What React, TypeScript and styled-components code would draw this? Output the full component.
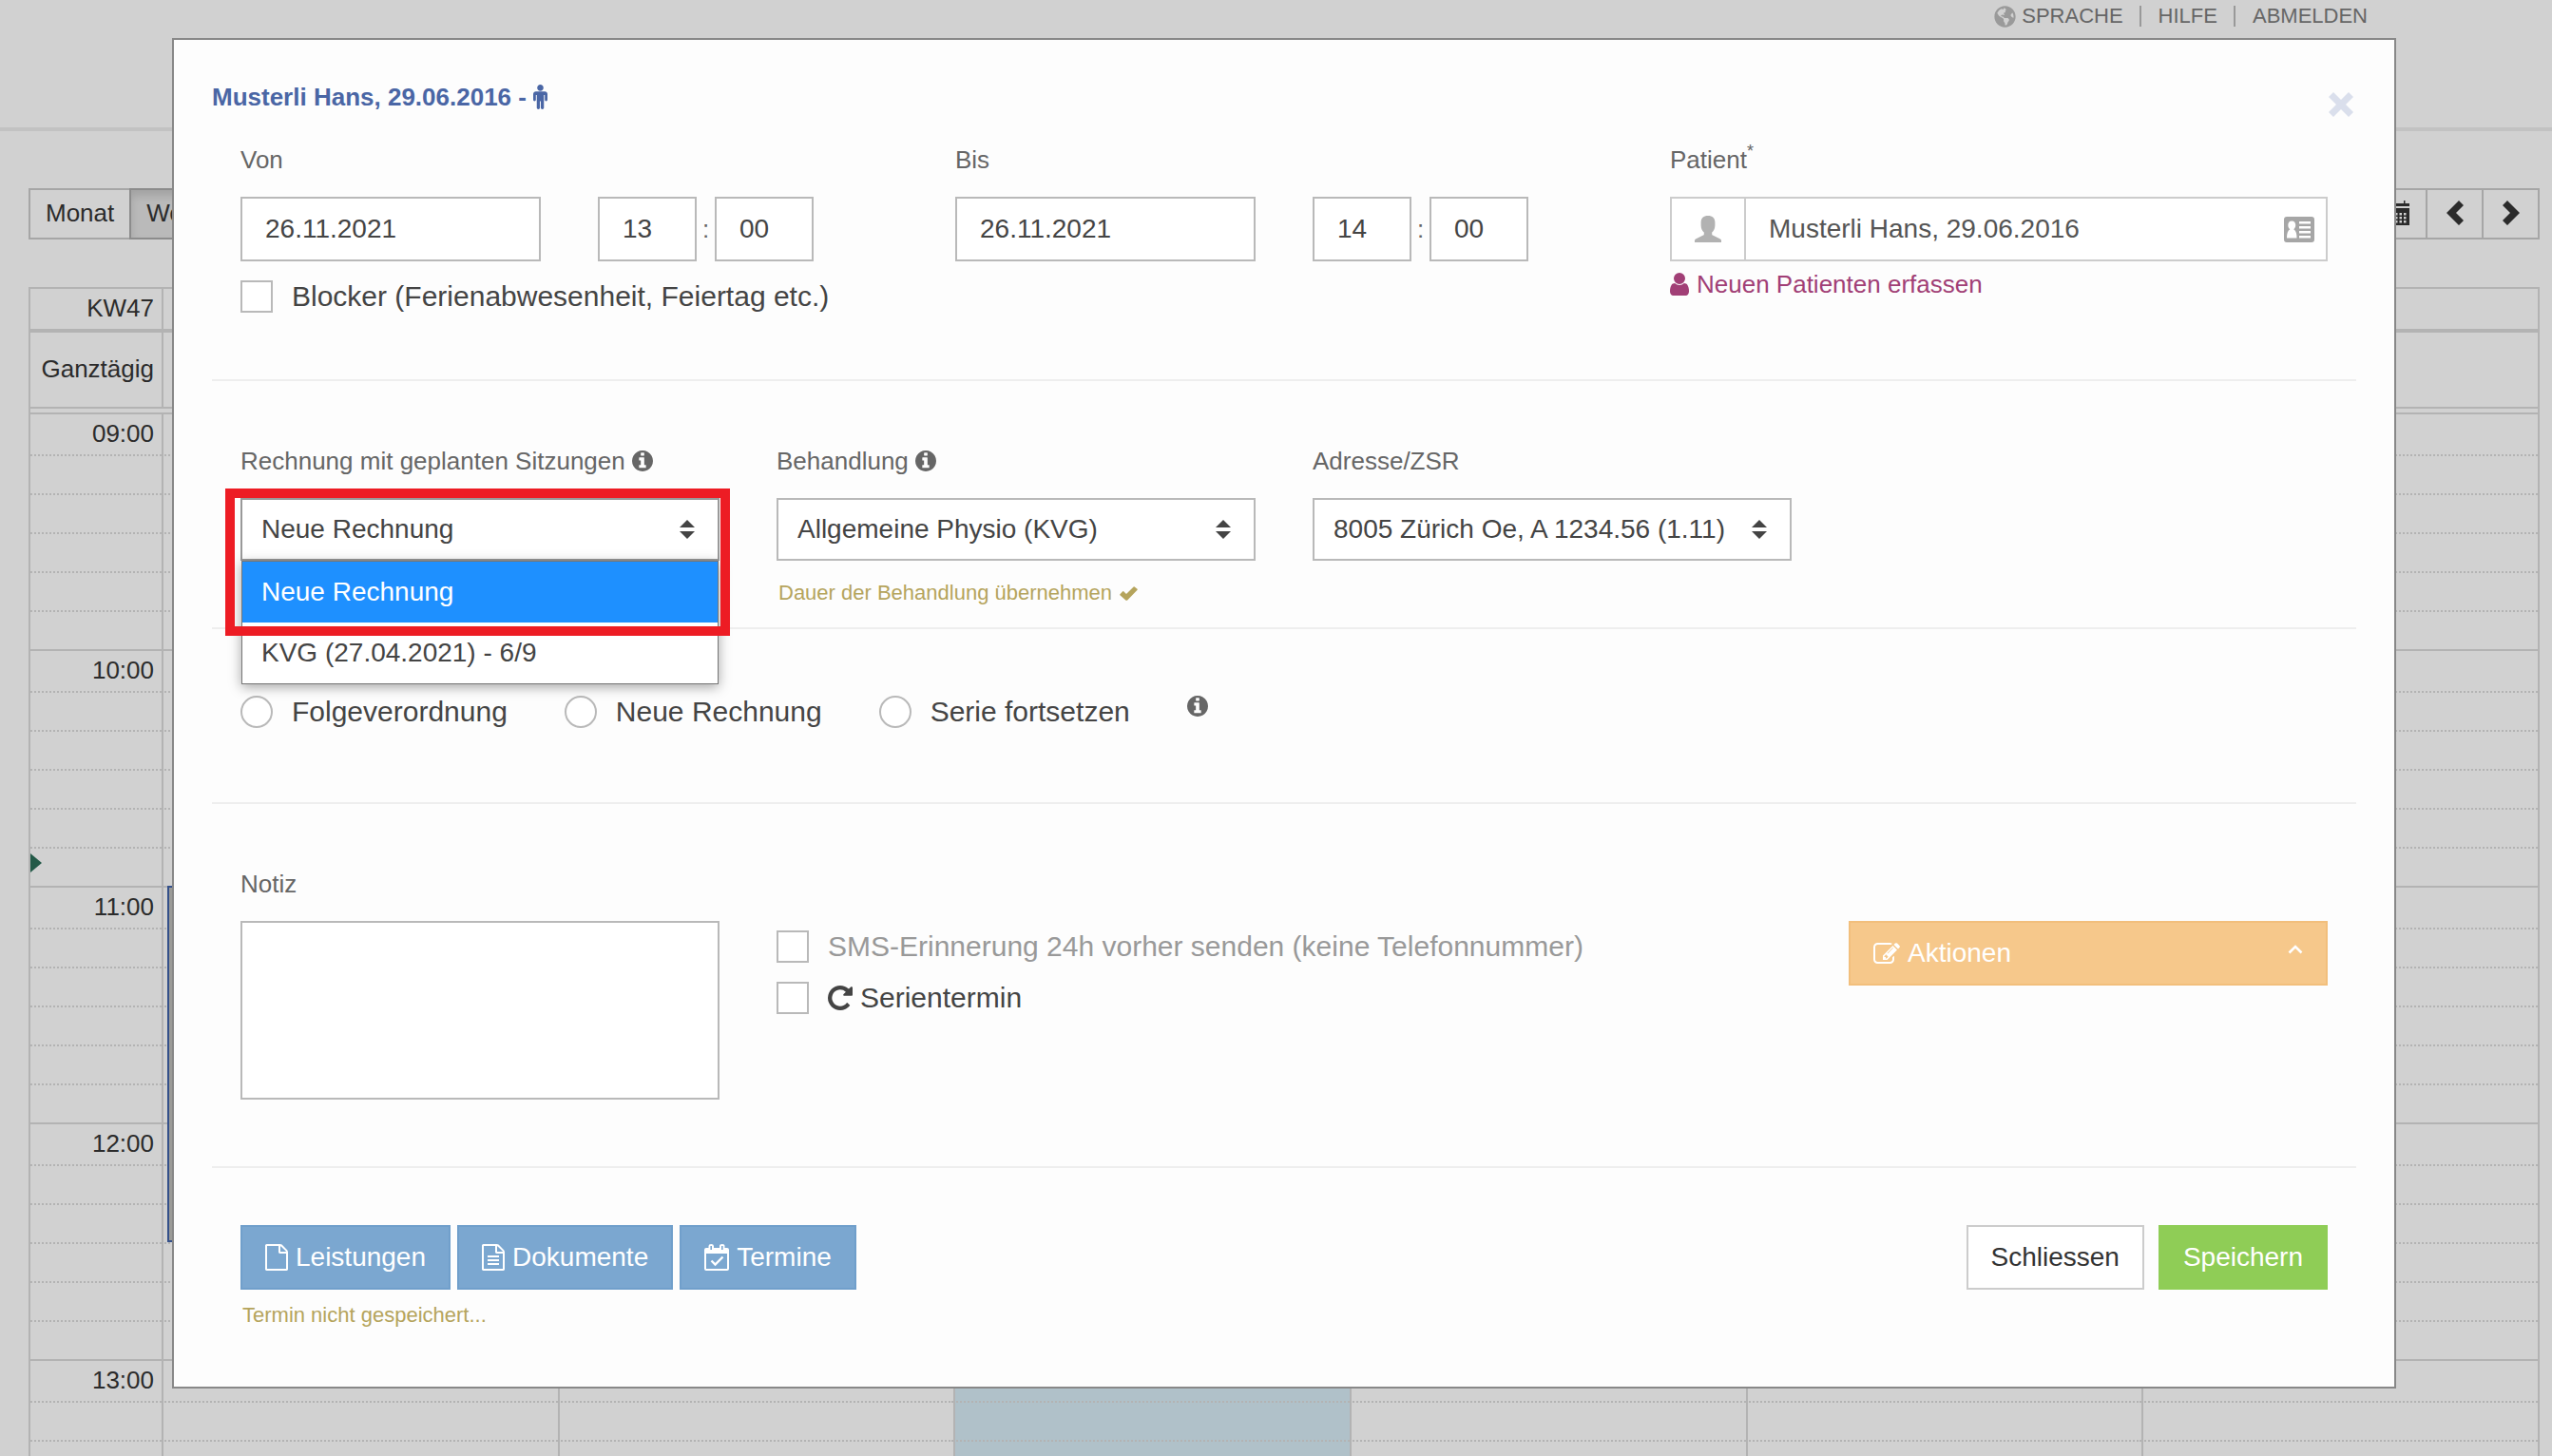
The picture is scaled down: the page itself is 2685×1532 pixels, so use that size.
import React from 'react';
import styled, { createGlobalStyle, css } from 'styled-components';
import { FaGlobeAmericas } from 'react-icons/fa';

const GlobalStyle = createGlobalStyle`
  *, *::before, *::after { box-sizing: border-box; }
  body {
    margin: 0;
    background: #d1d1d1;
    color: #2b2b2b;
    font-family: "Liberation Sans", Arial, Helvetica, sans-serif;
    font-size: 26px;
  }
  button, input, select, textarea { font-family: inherit; margin: 0; }
`;

/* ---------- icons ---------- */

type IconProps = { box: string; w: number; h: number; d: string };

const Svg = styled.svg`
  display: block;
  flex: none;
  fill: currentColor;
`;

const Glyph = ({ box, w, h, d }: IconProps) => (
  <Svg viewBox={box} width={w} height={h} aria-hidden="true">
    <path d={d} fillRule="evenodd" />
  </Svg>
);

const FILE_PATH =
  'M1596 380q28 28 48 76t20 88v1152q0 40-28 68t-68 28h-1344q-40 0-68-28t-28-68v-1600q0-40 28-68t68-28h896q40 0 88 20t76 48zm-444-244v376h376q-10-29-22-41l-313-313q-12-12-41-22zm384 1528v-1024h-416q-40 0-68-28t-28-68v-416h-768v1536h1280z';

const FileIcon = () => <Glyph box="128 0 1536 1792" w={24} h={28} d={FILE_PATH} />;

const FileTextIcon = () => (
  <Glyph
    box="128 0 1536 1792"
    w={24}
    h={28}
    d={`${FILE_PATH}M512 768h768v128h-768zM512 1024h768v128h-768zM512 1280h768v128h-768z`}
  />
);

const InfoIcon = () => (
  <Glyph
    box="128 128 1536 1536"
    w={22}
    h={22}
    d="M1152 1376v-160q0-14-9-23t-23-9h-96v-512q0-14-9-23t-23-9h-320q-14 0-23 9t-9 23v160q0 14 9 23t23 9h96v320h-96q-14 0-23 9t-9 23v160q0 14 9 23t23 9h448q14 0 23-9t9-23zm-128-896v-160q0-14-9-23t-23-9h-192q-14 0-23 9t-9 23v160q0 14 9 23t23 9h192q14 0 23-9t9-23zm640 416q0 209-103 385.5t-279.5 279.5-385.5 103-385.5-103-279.5-279.5-103-385.5 103-385.5 279.5-279.5 385.5-103 385.5 103 279.5 279.5 103 385.5z"
  />
);

const MaleIcon = () => (
  <Glyph
    box="256 -32 1024 1760"
    w={15}
    h={26}
    d="M1280 640v416q0 40-28 68t-68 28-68-28-28-68v-352h-64v912q0 46-33 79t-79 33-79-33-33-79v-464h-64v464q0 46-33 79t-79 33-79-33-33-79v-912h-64v352q0 40-28 68t-68 28-68-28-28-68v-416q0-80 56-136t136-56h640q80 0 136 56t56 136zm-288-448q0 93-65.5 158.5t-158.5 65.5-158.5-65.5-65.5-158.5 65.5-158.5 158.5-65.5 158.5 65.5 65.5 158.5z"
  />
);

const UserIcon = () => (
  <Glyph
    box="256 128 1280 1536"
    w={20}
    h={24}
    d="M1536 1399q0 109-62.5 187t-150.5 78h-854q-88 0-150.5-78t-62.5-187q0-85 8.5-160.5t31.5-152 58.5-131 94-89 134.5-34.5q131 128 313 128t313-128q76 0 134.5 34.5t94 89 58.5 131 31.5 152 8.5 160.5zm-256-887q0 159-112.5 271.5t-271.5 112.5-271.5-112.5-112.5-271.5 112.5-271.5 271.5-112.5 271.5 112.5 112.5 271.5z"
  />
);

const SilhouetteIcon = () => (
  <Glyph
    box="0 0 28 28"
    w={28}
    h={28}
    d="M14 0C18.6 0 21.4 2.6 21.4 7V10C21.4 13.4 20 16.2 18.2 17.6V19.4C18.2 20 18.5 20.3 19 20.5L27 24.6C27.7 25 28 25.4 28 26V28H0V26C0 25.4 .3 25 1 24.6L9 20.5C9.5 20.3 9.8 20 9.8 19.4V17.6C8 16.2 6.6 13.4 6.6 10V7C6.6 2.6 9.4 0 14 0Z"
  />
);

const IdCardIcon = () => (
  <Glyph
    box="0 0 32 27"
    w={32}
    h={27}
    d="M3 0H29Q32 0 32 3V24Q32 27 29 27H3Q0 27 0 24V3Q0 0 3 0ZM8.200 4.500C5.500 4.500 4.300 6.500 4.300 9C4.300 11 5.200 12.500 6.300 13.200C4 14.500 3 17.500 3 22.500H13.500C13.500 17.500 12.500 14.500 10.200 13.200C11.300 12.500 12.200 11 12.200 9C12.200 6.500 11 4.500 8.200 4.500ZM16 5H28V7.500H16ZM16 10H28V12.500H16ZM16 15H28V17.500H16ZM16 20H28V22.500H16Z"
  />
);

const RepeatIcon = () => (
  <Glyph
    box="128 128 1536 1536"
    w={26}
    h={26}
    d="M1664 256v448q0 26-19 45t-45 19h-448q-42 0-59-40-17-39 14-69l138-138q-148-137-349-137-104 0-198.500 40.500t-163.500 109.500-109.500 163.500-40.500 198.500 40.500 198.500 109.500 163.500 163.500 109.500 198.500 40.500q119 0 225-52t179-147q7-10 23-12 15 0 25 9l137 138q9 8 9.500 20.500t-7.500 22.500q-109 132-264 204.500t-327 72.500q-156 0-298-61t-245-164-164-245-61-298 61-298 164-245 245-164 298-61q147 0 284.500 55.500t244.500 156.500l130-129q29-31 70-14 39 17 39 59z"
  />
);

const EditIcon = () => (
  <Glyph
    box="0 128 1792 1408"
    w={28}
    h={22}
    d="M888 1184l116-116-152-152-116 116v56h96v96h56zm440-720q-16-16-33 1l-350 350q-17 17-1 33t33-1l350-350q17-17 1-33zm80 594v190q0 119-84.500 203.500t-203.500 84.500h-832q-119 0-203.500-84.500t-84.500-203.500v-832q0-119 84.500-203.500t203.500-84.500h832q63 0 117 25 15 7 18 23 3 17-9 29l-49 49q-14 14-32 8-23-6-45-6h-832q-66 0-113 47t-47 113v832q0 66 47 113t113 47h832q66 0 113-47t47-113v-126q0-13 9-22l64-64q15-15 35-7t20 29zm-96-738l288 288-672 672h-288v-288zm444 132l-92 92-288-288 92-92q28-28 68-28t68 28l152 152q28 28 28 68t-28 68z"
  />
);

const CheckIcon = () => (
  <Glyph
    box="0 0 19 15"
    w={19}
    h={15}
    d="M.4 8.200L3.200 5.300Q3.700 4.900 4.200 5.300L7 8L14.600 .5Q15.200 0 15.700 .4L18.600 2.700Q19 3.200 18.600 3.700L8.200 14.400Q7.200 15.200 6.300 14.400L.4 9.200Q0 8.700 .4 8.200Z"
  />
);

const CloseIcon = () => (
  <Glyph
    box="0 0 26 26"
    w={26}
    h={26}
    d="M5 0L13 8L21 0L26 5L18 13L26 21L21 26L13 18L5 26L0 21L8 13L0 5Z"
  />
);

const CalendarIcon = () => (
  <Glyph
    box="0 0 22 26"
    w={22}
    h={26}
    d="M4.500 0H6V3H16V0H17.500V3H22V6H0V3H4.500ZM0 8H22V26H0ZM3 13V15.500H5.500V13ZM7 13V15.500H9.500V13ZM11.500 13V15.500H14V13ZM16 13V15.500H18.500V13ZM3 17V19.500H5.500V17ZM7 17V19.500H9.500V17ZM11.500 17V19.500H14V17ZM16 17V19.500H18.500V17ZM3 21V23.500H5.500V21ZM7 21V23.500H9.500V21ZM11.500 21V23.500H14V21ZM16 21V23.500H18.500V21Z"
  />
);

const PrevIcon = () => (
  <Glyph box="0 0 18 26" w={18} h={26} d="M13 0L18 5L10 13L18 21L13 26L0 13Z" />
);

const NextIcon = () => (
  <Glyph box="0 0 18 26" w={18} h={26} d="M5 0L0 5L8 13L0 21L5 26L18 13Z" />
);

const CalendarCheckIcon = () => (
  <Svg viewBox="0 0 26 28" width={26} height={28} aria-hidden="true">
    <path d="M2 4H24Q26 4 26 6V26Q26 28 24 28H2Q0 28 0 26V6Q0 4 2 4ZM2 10V26H24V10Z" fillRule="evenodd" />
    <path d="M4.500 2Q4.500 0 7.200 0T10 2V6Q10 8 7.200 8T4.500 6ZM16 2Q16 0 18.800 0T21.500 2V6Q21.500 8 18.800 8T16 6Z" />
    <path d="M7.200 2V6M18.800 2V6" stroke="#7ba7d0" strokeWidth="1.600" />
    <path d="M7.500 17.500L11.500 21.500L19.500 13.500" fill="none" stroke="currentColor" strokeWidth="2.400" />
  </Svg>
);

const CaretUpIcon = () => (
  <Svg viewBox="0 0 16 10" width={16} height={10} aria-hidden="true">
    <path d="M1.500 8.500L8 2L14.500 8.500" fill="none" stroke="currentColor" strokeWidth="2.600" />
  </Svg>
);

const SortIcon = () => (
  <Glyph box="0 0 16 20" w={16} h={20} d="M8 0L16 8H0ZM0 12H16L8 20Z" />
);

/* ---------- calendar behind the dialog ---------- */

const Page = styled.div`
  height: 100vh;
  overflow: hidden;
`;

const TopBar = styled.header`
  height: 138px;
  border-bottom: 4px solid #c2c2c2;
  padding: 6px 194px 0 0;
`;

const TopNav = styled.nav`
  display: flex;
  justify-content: flex-end;
  align-items: center;
`;

const TopLink = styled.a`
  display: flex;
  align-items: center;
  gap: 6px;
  padding: 0 17px 0 18px;
  font-size: 22px;
  line-height: 22px;
  color: #666;
  text-decoration: none;
  & + & { border-left: 2px solid #999; }
  &:last-child { padding-right: 0; }
  svg { color: #9a9a9a; margin: -2px 0; }
`;

const CalendarArea = styled.main`
  padding: 60px 13px 0 30px;
`;

const Toolbar = styled.div`
  display: flex;
  justify-content: space-between;
  margin-bottom: 50px;
`;

const ButtonGroup = styled.div`
  display: flex;
`;

const ToolButton = styled.button<{ $active?: boolean; $icon?: boolean }>`
  display: flex;
  align-items: center;
  justify-content: center;
  height: 54px;
  padding: 0 16px 2px;
  border: 2px solid #a6a6a6;
  background: transparent;
  color: #2b2b2b;
  font-size: 26px;
  & + & { margin-left: -2px; }
  ${(p) => p.$icon && css`width: 61px;`}
  ${(p) =>
    p.$active &&
    css`
      border-color: #8c8c8c;
      background: #bababa;
      box-shadow: inset 0 6px 10px rgba(0, 0, 0, 0.13);
    `}
`;

const Calendar = styled.div`
  border: 2px solid #b3b3b3;
`;

const CalendarRow = styled.div<{ $h: number }>`
  display: grid;
  grid-template-columns: 138px repeat(6, 1fr);
  height: ${(p) => p.$h}px;
`;

type Line = 'none' | 'solid' | 'dotted';

const lineStyle = css<{ $line: Line }>`
  border-top: ${(p) => (p.$line === 'none' ? '0' : `2px ${p.$line} #b3b3b3`)};
`;

const AxisCell = styled.div<{ $line: Line }>`
  position: relative;
  display: flex;
  align-items: center;
  justify-content: flex-end;
  padding: 0 8px 2px 0;
  ${lineStyle}
`;

const DayCell = styled.div<{ $line: Line; $today?: boolean }>`
  position: relative;
  border-left: 2px solid #b3b3b3;
  background: ${(p) => (p.$today ? '#b0c1c9' : 'transparent')};
  ${lineStyle}
`;

const HeadRule = styled.div`
  height: 4px;
  background: #b3b3b3;
`;

const SplitRule = styled.div`
  height: 6px;
  border-top: 2px solid #b3b3b3;
`;

const NowMarker = styled.span`
  position: absolute;
  left: 0;
  top: 5px;
  border: solid transparent;
  border-width: 10px 0 10px 12px;
  border-left-color: #235a48;
`;

const EventBox = styled.div`
  position: absolute;
  z-index: 1;
  left: 4px;
  right: 8px;
  top: -2px;
  height: 375px;
  border: 2px solid #34508a;
  background: #9b9b98;
`;

const DAYS = [0, 1, 2, 3, 4, 5];
const SLOTS = [0, 1, 2, 3, 4, 5];
const HOURS = ['09:00', '10:00', '11:00', '12:00', '13:00'];
const TODAY = 2;

const CalendarView = () => (
  <CalendarArea>
    <Toolbar>
      <ButtonGroup>
        <ToolButton type="button">Monat</ToolButton>
        <ToolButton type="button" $active>Woche</ToolButton>
      </ButtonGroup>
      <ButtonGroup>
        <ToolButton type="button" $icon aria-label="Kalender"><CalendarIcon /></ToolButton>
        <ToolButton type="button" $icon aria-label="Zurück"><PrevIcon /></ToolButton>
        <ToolButton type="button" $icon aria-label="Weiter"><NextIcon /></ToolButton>
      </ButtonGroup>
    </Toolbar>
    <Calendar>
      <CalendarRow $h={42}>
        <AxisCell $line="none">KW47</AxisCell>
        {DAYS.map((d) => <DayCell key={d} $line="none" />)}
      </CalendarRow>
      <HeadRule />
      <CalendarRow $h={78}>
        <AxisCell $line="none">Ganztägig</AxisCell>
        {DAYS.map((d) => <DayCell key={d} $line="none" $today={d === TODAY} />)}
      </CalendarRow>
      <SplitRule />
      {HOURS.map((hour, h) =>
        SLOTS.map((slot) => {
          const line: Line = slot === 0 ? 'solid' : 'dotted';
          return (
            <CalendarRow key={`${hour}-${slot}`} $h={slot === 0 ? 44 : 41}>
              <AxisCell $line={line}>
                {slot === 0 && hour}
                {h === 1 && slot === 5 && <NowMarker />}
              </AxisCell>
              {DAYS.map((d) => (
                <DayCell key={d} $line={line} $today={d === TODAY}>
                  {h === 2 && slot === 0 && d === 0 && <EventBox />}
                </DayCell>
              ))}
            </CalendarRow>
          );
        }),
      )}
    </Calendar>
  </CalendarArea>
);

/* ---------- dialog ---------- */

const Overlay = styled.div`
  position: fixed;
  inset: 0;
  z-index: 10;
  padding: 40px 164px 0 181px;
`;

const Dialog = styled.div`
  padding: 42px 40px 0;
  border: 2px solid #888;
  background: #fdfdfd;
`;

const DialogHeader = styled.div`
  display: flex;
  justify-content: space-between;
  height: 40px;
  margin-bottom: 26px;
`;

const Title = styled.h1`
  display: flex;
  align-items: center;
  gap: 7px;
  height: 36px;
  margin: 0;
  font-size: 26px;
  line-height: 36px;
  color: #4a66a5;
`;

const CloseButton = styled.button`
  display: flex;
  align-items: flex-start;
  padding: 13px 3px 0 0;
  border: 0;
  background: none;
  color: #dadfec;
`;

const Section = styled.section<{ $top: number; $bottom: number; $rule?: boolean }>`
  display: grid;
  grid-template-columns: repeat(12, 1fr);
  padding: ${(p) => p.$top}px 0 ${(p) => p.$bottom}px;
  border-top: ${(p) => (p.$rule ? '2px solid #eee' : '0')};
`;

const Col = styled.div<{ $span: number; $skip?: number }>`
  grid-column: span ${(p) => p.$span};
  min-width: 0;
  padding: ${(p) => p.$skip ?? 0}px 30px 0;
`;

const Label = styled.label`
  display: flex;
  align-items: center;
  gap: 7px;
  height: 36px;
  margin-bottom: 21px;
  line-height: 36px;
  color: #666;
`;

const Required = styled.sup`
  font-size: 18px;
  line-height: 0;
  vertical-align: 12px;
`;

const control = css`
  width: 100%;
  min-width: 0;
  border: 2px solid #b9b9b9;
  border-radius: 0;
  background: #fff;
  color: #444;
  font-size: 28px;
  outline: 0;
`;

const TextInput = styled.input`
  ${control}
  height: 68px;
  padding: 0 24px;
`;

const DateTimeRow = styled.div`
  display: grid;
  grid-template-columns: 1fr 1fr;
  gap: 60px;
`;

const TimeRow = styled.div`
  display: flex;
  align-items: center;
  color: #666;
  ${TextInput} { width: 104px; }
`;

const Colon = styled.span`
  width: 19px;
  text-align: center;
`;

const ChoiceLabel = styled.label<{ $muted?: boolean }>`
  display: flex;
  align-items: center;
  gap: 20px;
  font-size: 30px;
  line-height: 34px;
  color: ${(p) => (p.$muted ? '#999' : '#444')};
`;

const ChoiceText = styled.span`
  display: flex;
  align-items: center;
  gap: 8px;
`;

const Choice = styled.input<{ type: 'checkbox' | 'radio' }>`
  appearance: none;
  flex: none;
  width: 34px;
  height: 34px;
  border: 2px solid #b9b9b9;
  border-radius: ${(p) => (p.type === 'radio' ? '50%' : '0')};
  background: #fff;
`;

const BelowField = styled.div`
  padding-top: 20px;
`;

const PatientBox = styled.div`
  display: flex;
  align-items: center;
  height: 68px;
  padding-right: 12px;
  border: 2px solid #ccc;
  background: #fff;
  color: #a6a6a6;
`;

const PatientAddon = styled.span`
  display: flex;
  flex: none;
  align-items: center;
  justify-content: center;
  align-self: stretch;
  width: 78px;
  border-right: 2px solid #ccc;
  color: #b2b2b2;
`;

const PatientInput = styled.input`
  flex: 1;
  min-width: 0;
  padding: 0 24px;
  border: 0;
  outline: 0;
  background: transparent;
  color: #555;
  font-size: 28px;
`;

const NewPatientLink = styled.a`
  display: flex;
  align-items: center;
  gap: 8px;
  margin-top: 6px;
  line-height: 36px;
  color: #a13f76;
  text-decoration: none;
`;

const SelectBox = styled.div`
  position: relative;
  display: grid;
  align-items: center;
  color: #444;
  > select, > svg { grid-area: 1 / 1; }
  > svg {
    justify-self: end;
    margin-right: 26px;
    pointer-events: none;
  }
`;

const Select = styled.select<{ $open?: boolean }>`
  ${control}
  appearance: none;
  height: 66px;
  padding: 0 60px 2px 20px;
  ${(p) => p.$open && css`border-color: #999;`}
`;

const OptionList = styled.ul`
  position: absolute;
  z-index: 1;
  top: 100%;
  left: 1px;
  right: 1px;
  margin: 0;
  padding: 0;
  list-style: none;
  border: 1px solid #767676;
  background: #fff;
  box-shadow: 0 3px 12px rgba(0, 0, 0, 0.35);
`;

const OptionItem = styled.li<{ $selected?: boolean }>`
  padding: 0 20px;
  font-size: 28px;
  line-height: 64px;
  background: ${(p) => (p.$selected ? '#1e90ff' : '#fff')};
  color: ${(p) => (p.$selected ? '#fff' : '#444')};
`;

const Highlight = styled.div`
  position: absolute;
  z-index: 2;
  top: -10px;
  left: -16px;
  right: -11px;
  height: 155px;
  border: 10px solid #ed1c24;
  pointer-events: none;
`;

const Hint = styled.p`
  display: flex;
  align-items: center;
  gap: 8px;
  margin: 0;
  padding-left: 2px;
  font-size: 22px;
  line-height: 30px;
  color: #b5a45c;
`;

const HintSlot = styled.div`
  padding-top: 19px;
`;

const HintLink = styled(Hint).attrs({ as: 'a' })<{ href?: string }>`
  text-decoration: none;
`;

const RadioRow = styled.div`
  grid-column: 1 / -1;
  display: flex;
  gap: 60px;
  padding: 0 30px;
  color: #666;
`;

const NoteArea = styled.textarea`
  ${control}
  display: block;
  height: 188px;
  padding: 12px 24px;
  resize: none;
`;

const ChoiceStack = styled.div`
  display: flex;
  flex-direction: column;
  align-items: flex-start;
  gap: 20px;
`;

const tones = {
  blue: css`border-color: #709fcb; background: #7ba7d0; color: #fff;`,
  orange: css`border-color: #f2bf7c; background: #f6c88b; color: #fff;`,
  green: css`border-color: #8fcd56; background: #8fcd56; color: #fff;`,
  plain: css`border-color: #ccc; background: #fff; color: #333;`,
};

const Button = styled.button<{ $tone: keyof typeof tones; $wide?: boolean }>`
  display: flex;
  align-items: center;
  gap: 8px;
  width: ${(p) => (p.$wide ? '100%' : 'auto')};
  height: 68px;
  padding: 0 24px;
  border: 2px solid;
  font-size: 28px;
  ${(p) => tones[p.$tone]}
`;

const ButtonEnd = styled.span`
  margin-left: auto;
  padding-bottom: 8px;
`;

const Actions = styled.div<{ $gap: number; $end?: boolean }>`
  display: flex;
  justify-content: ${(p) => (p.$end ? 'flex-end' : 'flex-start')};
  gap: ${(p) => p.$gap}px;
`;

const SaveState = styled.div`
  padding-top: 12px;
`;

const DateTime = ({ id, label, date, hour, minute }: {
  id: string; label: string; date: string; hour: string; minute: string;
}) => (
  <>
    <Label htmlFor={id}>{label}</Label>
    <DateTimeRow>
      <TextInput id={id} defaultValue={date} />
      <TimeRow>
        <TextInput aria-label={`${label} Stunde`} defaultValue={hour} />
        <Colon>:</Colon>
        <TextInput aria-label={`${label} Minute`} defaultValue={minute} />
      </TimeRow>
    </DateTimeRow>
  </>
);

const AppointmentDialog = () => (
  <Dialog role="dialog" aria-labelledby="dialog-title">
    <DialogHeader>
      <Title id="dialog-title">Musterli Hans, 29.06.2016 - <MaleIcon /></Title>
      <CloseButton type="button" aria-label="Dialog schliessen"><CloseIcon /></CloseButton>
    </DialogHeader>

    <Section $top={0} $bottom={70}>
      <Col $span={4}>
        <DateTime id="from" label="Von" date="26.11.2021" hour="13" minute="00" />
        <BelowField>
          <ChoiceLabel>
            <Choice type="checkbox" />
            Blocker (Ferienabwesenheit, Feiertag etc.)
          </ChoiceLabel>
        </BelowField>
      </Col>
      <Col $span={4}>
        <DateTime id="to" label="Bis" date="26.11.2021" hour="14" minute="00" />
      </Col>
      <Col $span={4}>
        <Label htmlFor="patient"><span>Patient<Required>*</Required></span></Label>
        <PatientBox>
          <PatientAddon><SilhouetteIcon /></PatientAddon>
          <PatientInput id="patient" defaultValue="Musterli Hans, 29.06.2016" />
          <IdCardIcon />
        </PatientBox>
        <NewPatientLink href="#patient"><UserIcon />Neuen Patienten erfassen</NewPatientLink>
      </Col>
    </Section>

    <Section $rule $top={66} $bottom={21}>
      <Col $span={3}>
        <Label htmlFor="invoice">Rechnung mit geplanten Sitzungen <InfoIcon /></Label>
        <SelectBox>
          <Select id="invoice" $open>
            <option>Neue Rechnung</option>
          </Select>
          <SortIcon />
          <OptionList role="listbox" aria-label="Rechnung">
            <OptionItem role="option" aria-selected="true" $selected>Neue Rechnung</OptionItem>
            <OptionItem role="option" aria-selected="false">KVG (27.04.2021) - 6/9</OptionItem>
          </OptionList>
          <Highlight />
        </SelectBox>
      </Col>
      <Col $span={3}>
        <Label htmlFor="treatment">Behandlung <InfoIcon /></Label>
        <SelectBox>
          <Select id="treatment">
            <option>Allgemeine Physio (KVG)</option>
          </Select>
          <SortIcon />
        </SelectBox>
        <HintSlot>
          <HintLink href="#treatment">Dauer der Behandlung übernehmen <CheckIcon /></HintLink>
        </HintSlot>
      </Col>
      <Col $span={3}>
        <Label htmlFor="address">Adresse/ZSR</Label>
        <SelectBox>
          <Select id="address">
            <option>8005 Zürich Oe, A 1234.56 (1.11)</option>
          </Select>
          <SortIcon />
        </SelectBox>
      </Col>
    </Section>

    <Section $rule $top={70} $bottom={78}>
      <RadioRow>
        {['Folgeverordnung', 'Neue Rechnung', 'Serie fortsetzen'].map((text) => (
          <ChoiceLabel key={text}>
            <Choice type="radio" name="mode" />
            {text}
          </ChoiceLabel>
        ))}
        <InfoIcon />
      </RadioRow>
    </Section>

    <Section $rule $top={66} $bottom={70}>
      <Col $span={3}>
        <Label htmlFor="note">Notiz</Label>
        <NoteArea id="note" />
      </Col>
      <Col $span={6} $skip={67}>
        <ChoiceStack>
          <ChoiceLabel $muted>
            <Choice type="checkbox" disabled />
            SMS-Erinnerung 24h vorher senden (keine Telefonnummer)
          </ChoiceLabel>
          <ChoiceLabel>
            <Choice type="checkbox" />
            <ChoiceText><RepeatIcon />Serientermin</ChoiceText>
          </ChoiceLabel>
        </ChoiceStack>
      </Col>
      <Col $span={3} $skip={57}>
        <Button type="button" $tone="orange" $wide>
          <EditIcon />Aktionen
          <ButtonEnd><CaretUpIcon /></ButtonEnd>
        </Button>
      </Col>
    </Section>

    <Section $rule $top={60} $bottom={60}>
      <Col $span={6}>
        <Actions $gap={7}>
          <Button type="button" $tone="blue"><FileIcon />Leistungen</Button>
          <Button type="button" $tone="blue"><FileTextIcon />Dokumente</Button>
          <Button type="button" $tone="blue"><CalendarCheckIcon />Termine</Button>
        </Actions>
        <SaveState><Hint>Termin nicht gespeichert...</Hint></SaveState>
      </Col>
      <Col $span={6}>
        <Actions $gap={15} $end>
          <Button type="button" $tone="plain">Schliessen</Button>
          <Button type="button" $tone="green">Speichern</Button>
        </Actions>
      </Col>
    </Section>
  </Dialog>
);

export default function App() {
  return (
    <Page>
      <GlobalStyle />
      <TopBar>
        <TopNav>
          <TopLink href="#sprache"><FaGlobeAmericas size={23} />SPRACHE</TopLink>
          <TopLink href="#hilfe">HILFE</TopLink>
          <TopLink href="#abmelden">ABMELDEN</TopLink>
        </TopNav>
      </TopBar>
      <CalendarView />
      <Overlay>
        <AppointmentDialog />
      </Overlay>
    </Page>
  );
}
